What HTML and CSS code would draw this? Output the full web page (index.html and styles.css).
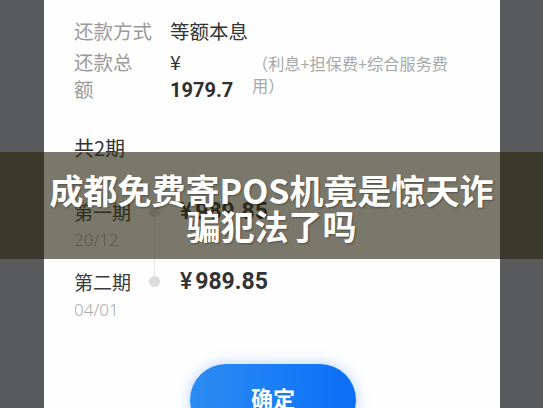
FILE: index.html
```html
<!DOCTYPE html>
<html lang="zh-CN">
<head>
<meta charset="utf-8">
<title>还款计划</title>
<link rel="stylesheet" href="styles.css">
</head>
<body>
<div class="page">
  <div class="card">
    <div class="info-row">
      <div class="label">还款方式</div>
      <div class="value">等额本息</div>
    </div>
    <div class="info-row">
      <div class="label">还款总<br>额</div>
      <div class="value amount-total">¥<br><b>1979.7</b></div>
      <div class="note">（利息+担保费+综合服务费用）</div>
    </div>

    <div class="periods-title">共2期</div>

    <div class="timeline">
      <div class="t-item">
        <div class="t-name">第一期</div>
        <div class="t-dot has-line"></div>
        <div class="t-amount"><span class="yen">¥</span>989.85</div>
        <div class="t-date">20/12</div>
      </div>
      <div class="t-item">
        <div class="t-name">第二期</div>
        <div class="t-dot"></div>
        <div class="t-amount"><span class="yen">¥</span>989.85</div>
        <div class="t-date">04/01</div>
      </div>
    </div>

    <button class="confirm">确定</button>
  </div>

  <div class="banner">
    <h1 class="banner-title">成都免费寄POS机竟是惊天诈骗犯法了吗</h1>
  </div>
</div>
</body>
</html>
```

FILE: styles.css
```css
* { box-sizing: border-box; }
html, body {
  margin: 0;
  padding: 0;
  height: 100%;
}
body {
  background: #58595b;
  font-family: "Noto Sans CJK SC", "Noto Sans", sans-serif;
  overflow: hidden;
}
.page {
  position: relative;
  width: 543px;
  height: 408px;
  overflow: hidden;
}
.card {
  margin-left: 44px;
  width: 456px;
  height: 408px;
  background: #fefefe;
  padding: 17px 0 0 30px;
  display: flex;
  flex-direction: column;
}
.info-row {
  display: grid;
  grid-template-columns: 96px 82px 200px;
  font-size: 19.5px;
  line-height: 27px;
  margin-bottom: 4px;
}
.label { color: #9a9a9a; }
.value { color: #333; }
.amount-total b {
  font-family: "Roboto", "Noto Sans", sans-serif;
  font-weight: 700;
  font-size: 20px;
  color: #2e2e2e;
}
.note {
  color: #a8a8a8;
  font-size: 16.2px;
  line-height: 22px;
  margin-top: 4px;
  width: 200px;
}
.periods-title {
  margin-top: 26px;
  font-size: 20px;
  line-height: 27px;
  color: #333;
}
.timeline {
  margin-top: 37px;
  display: flex;
  flex-direction: column;
  gap: 15px;
}
.t-item {
  display: grid;
  grid-template-columns: 72px 16px 1fr;
  grid-template-rows: 27px 28px;
  align-items: center;
}
.t-name {
  font-size: 19px;
  color: #3a3a3a;
}
.t-dot {
  position: relative;
  justify-self: center;
  width: 11px;
  height: 11px;
  border-radius: 50%;
  background: #dcdcdc;
}
.t-dot.has-line::after {
  content: "";
  position: absolute;
  left: 5px;
  top: 6px;
  width: 1px;
  height: 70px;
  background: #e6e6e6;
}
.t-amount {
  padding-left: 18px;
  font-family: "Roboto", "Noto Sans", sans-serif;
  font-weight: 700;
  font-size: 23px;
  color: #333;
}
.yen {
  font-weight: 500;
  margin-right: 3px;
}
.t-date {
  grid-column: 1 / 3;
  font-family: "Noto Sans", sans-serif;
  font-weight: 300;
  font-size: 17px;
  color: #ababab;
}
.confirm {
  margin: 41px 0 0 116px;
  width: 166px;
  height: 72px;
  flex: none;
  border: none;
  border-radius: 36px;
  background: linear-gradient(90deg, #2d8cf2 0%, #1a7ef6 50%, #0b6ef6 100%);
  box-shadow: 0 0 14px rgba(40, 130, 255, 0.35);
  color: #fff;
  font-family: "Noto Sans CJK SC", sans-serif;
  font-weight: 700;
  font-size: 22px;
  padding: 0 0 6px 0;
  line-height: 66px;
}
.banner {
  position: absolute;
  left: 0;
  right: 0;
  top: 152px;
  height: 107px;
  background: rgba(40, 37, 15, 0.62);
  padding-top: 20px;
  display: flex;
  justify-content: center;
}
.banner-title {
  margin: 0;
  width: 460px;
  text-align: center;
  color: #fff;
  font-family: "Noto Sans CJK SC", sans-serif;
  font-weight: 700;
  font-size: 34px;
  line-height: 36px;
  text-shadow: 1px 1px 2px rgba(0, 0, 0, 0.35);
}
```
